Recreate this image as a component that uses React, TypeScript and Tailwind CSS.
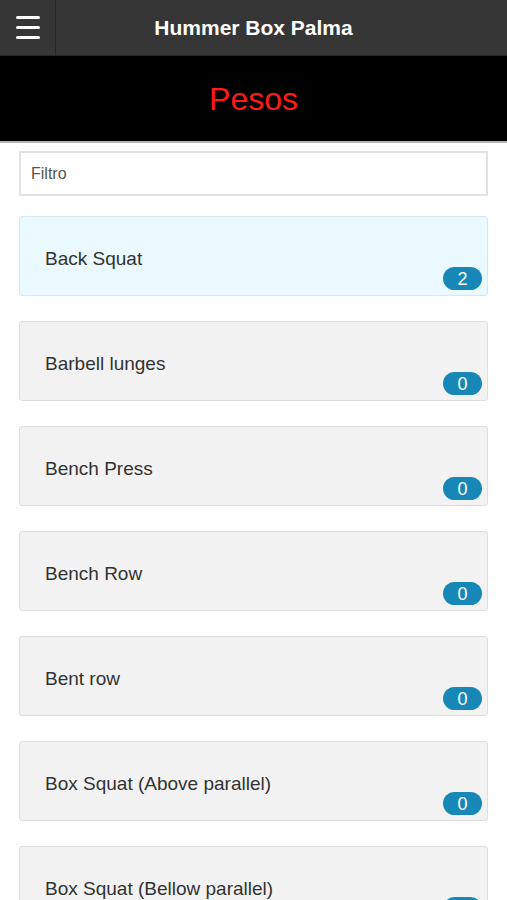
export default function App() {
  const items = [
    { name: "Back Squat", count: 2, active: true },
    { name: "Barbell lunges", count: 0 },
    { name: "Bench Press", count: 0 },
    { name: "Bench Row", count: 0 },
    { name: "Bent row", count: 0 },
    { name: "Box Squat (Above parallel)", count: 0 },
    { name: "Box Squat (Bellow parallel)", count: 0 },
  ];

  return (
    <div className="h-[900px] overflow-hidden bg-white font-['Liberation_Sans',Arial,sans-serif]">
      {/* top bar */}
      <header className="flex h-[56px] bg-[#363636] border-b border-[#2a2a2a]">
        <div className="w-[56px] flex flex-col items-center justify-center gap-[7px] border-r border-[#262626]">
          <span className="block w-[24px] h-[3px] bg-white rounded-sm" />
          <span className="block w-[24px] h-[3px] bg-white rounded-sm" />
          <span className="block w-[24px] h-[3px] bg-white rounded-sm" />
        </div>
        <h1 className="flex-1 flex items-center justify-center text-white font-bold text-[21px] pr-[56px]">
          Hummer Box Palma
        </h1>
      </header>

      <div className="h-[87px] bg-black flex items-center justify-center border-b-2 border-[#b5b5b5]">
        <h2 className="text-[#ff1a1a] text-[32px]">Pesos</h2>
      </div>

      <div className="px-[19px] pt-[8px]">
        <input
          placeholder="Filtro"
          className="w-full h-[45px] border-2 border-[#e2e2e2] px-[10px] text-[16px] text-[#333] placeholder:text-[#555] outline-none"
        />

        <div className="mt-[20px] flex flex-col gap-[25px]">
          {items.map((it) => (
            <div
              key={it.name}
              className={
                it.active
                  ? "relative h-[80px] flex items-center pl-[25px] pt-[6px] rounded-[3px] border border-[#dce6ea] bg-[#eaf9fd] text-[19px] text-[#333]"
                  : "relative h-[80px] flex items-center pl-[25px] pt-[6px] rounded-[3px] border border-[#dedede] bg-[#f2f2f2] text-[19px] text-[#333]"
              }
            >
              <span>{it.name}</span>
              <span className="absolute right-[5px] bottom-[5px] w-[39px] h-[23px] rounded-full bg-[#1787b8] text-white text-[18px] flex items-center justify-center leading-none">
                {it.count}
              </span>
            </div>
          ))}
        </div>
      </div>
    </div>
  );
}
